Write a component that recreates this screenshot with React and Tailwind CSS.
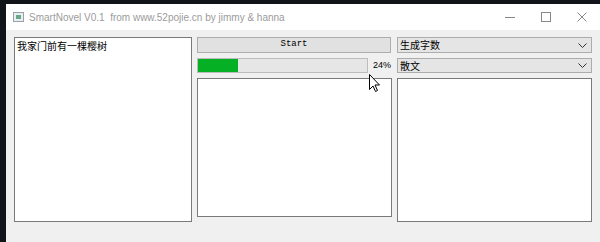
import React from 'react';

const Chevron = () => (
  <svg width="9" height="5" viewBox="0 0 9 5" className="shrink-0">
    <path d="M0.5 0.5 L4.5 4.5 L8.5 0.5" fill="none" stroke="#333" strokeWidth="1" />
  </svg>
);

const Combo = ({ label, h }) => (
  <div
    className={`flex items-center justify-between border border-[#acacac] bg-[#e5e5e5] pl-[2px] pr-[4px] text-[10px] leading-none text-black ${h}`}
    style={{ fontFamily: '"Noto Sans CJK SC", sans-serif' }}
  >
    <span>{label}</span>
    <Chevron />
  </div>
);

const App = () => {
  return (
    <div className="relative h-[242px] w-[600px] overflow-hidden bg-[#111418] pl-[6px] pt-[4px]">
      <div className="flex h-full flex-col">
        {/* title bar */}
        <div className="flex h-[26px] shrink-0 items-center bg-white">
          <div className="ml-[7px] flex h-[10px] w-[11px] items-center justify-center border border-[#9aa0a6] bg-[#e8eef2]">
            <div className="h-[4px] w-[5px] bg-[#6aa88a]" />
          </div>
          <span
            className="ml-[5px] text-[10px] text-[#9b9b9b] whitespace-pre"
            style={{ fontFamily: '"Liberation Sans", sans-serif' }}
          >
            SmartNovel V0.1  from www.52pojie.cn by jimmy &amp; hanna
          </span>
          <div className="ml-auto flex h-full items-center">
            <div className="flex h-full w-[36px] items-center justify-center">
              <div className="h-px w-[10px] bg-[#888]" />
            </div>
            <div className="flex h-full w-[36px] items-center justify-center">
              <div className="h-[10px] w-[10px] border border-[#888]" />
            </div>
            <div className="flex h-full w-[36px] items-center justify-center">
              <svg width="10" height="10" viewBox="0 0 10 10">
                <path d="M0.5 0.5 L9.5 9.5 M9.5 0.5 L0.5 9.5" stroke="#888" strokeWidth="1" />
              </svg>
            </div>
          </div>
        </div>

        {/* client area */}
        <div className="flex flex-1 gap-[5px] bg-[#f0f0f0] pl-[8px] pr-[2px] pt-[7px] pb-[20px]">
          <div
            className="w-[178px] border border-[#7a7a7a] bg-white px-[2px] pt-[1px] text-[10px] leading-[14px] text-black"
            style={{ fontFamily: '"Noto Sans CJK SC", sans-serif' }}
          >
            我家门前有一棵樱树
          </div>

          <div className="flex w-[195px] flex-col gap-[5px] pb-[5px]">
            <div
              className="flex h-[16px] w-[194px] items-center justify-center border border-[#adadad] bg-[#e1e1e1] text-[9px] text-black"
              style={{ fontFamily: '"Liberation Mono", monospace' }}
            >
              Start
            </div>
            <div className="flex h-[15px] items-center">
              <div className="h-full w-[171px] border border-[#bcbcbc] bg-[#e6e6e6]">
                <div className="h-full w-[40px] bg-[#06b025]" />
              </div>
              <span
                className="ml-[5px] text-[9px] text-black"
                style={{ fontFamily: '"Liberation Sans", sans-serif' }}
              >
                24%
              </span>
            </div>
            <div className="flex-1 border border-[#7a7a7a] bg-white" />
          </div>

          <div className="flex w-[195px] flex-col gap-[5px]">
            <Combo label="生成字数" h="h-[16px]" />
            <Combo label="散文" h="h-[15px]" />
            <div className="flex-1 border border-[#7a7a7a] bg-white" />
          </div>
        </div>
      </div>

      {/* mouse cursor */}
      <svg className="absolute left-[369px] top-[74px]" width="12" height="19" viewBox="0 0 12 19">
        <path
          d="M0.5 0.5 L0.5 15.5 L4 12 L6.5 17.5 L8.5 16.5 L6 11 L10.5 11 Z"
          fill="#fff"
          stroke="#000"
          strokeWidth="1"
        />
      </svg>
    </div>
  );
};

export default App;
